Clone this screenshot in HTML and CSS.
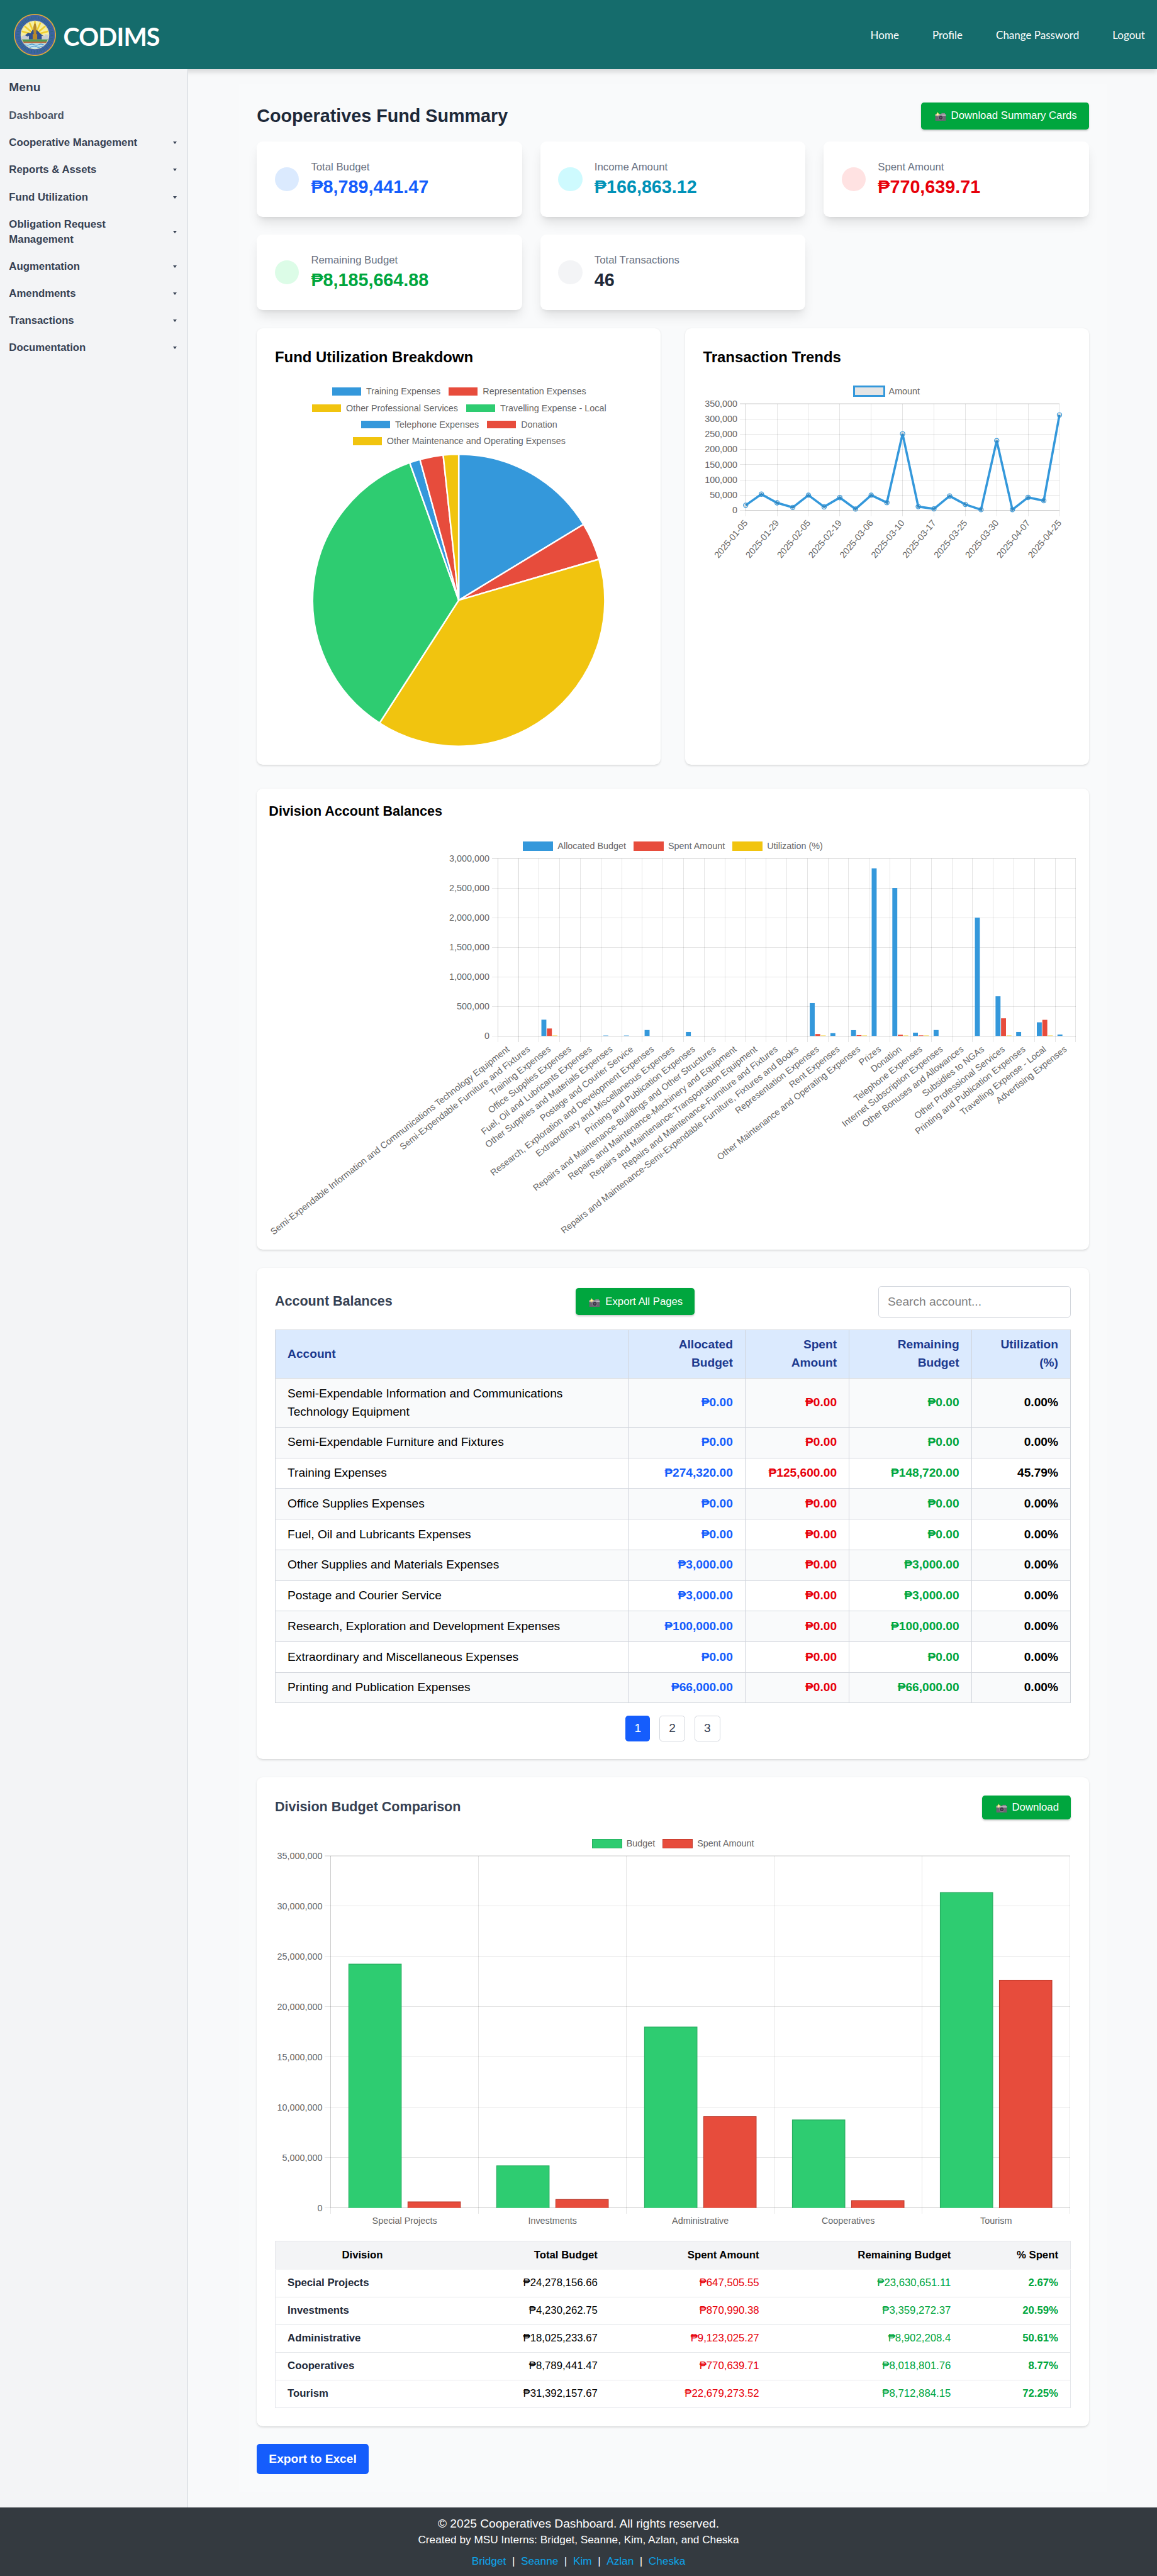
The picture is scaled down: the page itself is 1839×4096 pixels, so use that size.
FILE: index.html
```html
<!DOCTYPE html>
<html lang="en">
<head>
<meta charset="utf-8">
<title>CODIMS</title>
<link rel="stylesheet" href="styles.css">
</head>
<body>
<svg class="sprite" aria-hidden="true">
  <symbol id="camera" viewBox="0 0 14 12">
    <rect x="0" y="2.6" width="14" height="9.2" rx="0.8" fill="#6b6472"/>
    <rect x="0" y="3.4" width="14" height="1.8" fill="#b9b6bd"/>
    <rect x="8.2" y="1.6" width="4.6" height="1.6" fill="#8d8892"/>
    <circle cx="7.3" cy="7.6" r="3.4" fill="#8f8a96"/>
    <circle cx="7.3" cy="7.6" r="2.6" fill="#3b3442"/>
    <circle cx="7.3" cy="7.6" r="1.2" fill="#5d5570"/>
    <path d="M3.2 0l1 2 2 1-2 1-1 2-1-2-2-1 2-1z" fill="#fcd668"/>
    <circle cx="3.2" cy="3" r="1.1" fill="#fff3c4"/>
  </symbol>
</svg>

<header class="topbar">
  <div class="brand">
    <svg class="logo" viewBox="0 0 56 56">
      <defs><clipPath id="seal"><circle cx="28" cy="28" r="18.4"/></clipPath></defs>
      <circle cx="28" cy="28" r="28" fill="#e3a83a"/>
      <circle cx="28" cy="28" r="26.6" fill="#3f62a6"/>
      <circle cx="28" cy="28" r="22.6" fill="none" stroke="#2c6a86" stroke-width="4" stroke-dasharray="1.3 1.1 0.6 1.4"/>
      <g clip-path="url(#seal)">
        <rect width="56" height="56" fill="#f6efa0"/>
        <g stroke="#f1cd2f" stroke-width="2.2">
          <path d="M28 28L6 22M28 28L9 12M28 28L18 6M28 28V4M28 28L38 6M28 28L47 12M28 28L50 22"/>
        </g>
        <path d="M12 31l7-6 3 1 3-5 6 1 5 5 6 4v3H12z" fill="#31518f"/>
        <path d="M10 30l4-2 4 2 2-1v6H10zM37 29l4 0 0-2 6 1v7H37z" fill="#c9ccd2"/>
        <rect x="8" y="34" width="40" height="3.4" fill="#4f9a55"/>
        <rect x="8" y="37" width="40" height="2" fill="#b5673c"/>
        <rect x="8" y="39" width="40" height="9" fill="#bfe3f2"/>
        <path d="M9 41q3-1.6 6 0t6 0 6 0 6 0 6 0 6 0M12 43.6q3-1.6 6 0t6 0 6 0 6 0 6 0" fill="none" stroke="#3f8fc4" stroke-width="0.9"/>
        <path d="M27 13h2l1.2 5-.6 9h1.4v7h-6v-7h1.4l-.6-9z" fill="#b98a2b"/>
      </g>
      <circle cx="28" cy="28" r="18.6" fill="none" stroke="#f4eeb5" stroke-width="0.8"/>
    </svg>
    <span class="brand-name">CODIMS</span>
  </div>
  <nav class="topnav">
    <a>Home</a><a>Profile</a><a>Change Password</a><a>Logout</a>
  </nav>
</header>

<div class="shell">
  <aside class="sidebar">
    <h2>Menu</h2>
    <ul>
      <li class="plain">Dashboard</li>
      <li>Cooperative Management<i></i></li>
      <li>Reports &amp; Assets<i></i></li>
      <li>Fund Utilization<i></i></li>
      <li><span>Obligation Request<br>Management</span><i></i></li>
      <li>Augmentation<i></i></li>
      <li>Amendments<i></i></li>
      <li>Transactions<i></i></li>
      <li>Documentation<i></i></li>
    </ul>
  </aside>

  <main class="main">
    <div class="container">
      <div class="row-between page-head">
        <h1>Cooperatives Fund Summary</h1>
        <button class="btn-green"><svg><use href="#camera"/></svg>Download Summary Cards</button>
      </div>

      <section class="stats">
        <div class="stat"><b class="dot dot-blue"></b><div><p>Total Budget</p><strong class="blue">₱8,789,441.47</strong></div></div>
        <div class="stat"><b class="dot dot-cyan"></b><div><p>Income Amount</p><strong class="cyan">₱166,863.12</strong></div></div>
        <div class="stat"><b class="dot dot-red"></b><div><p>Spent Amount</p><strong class="red">₱770,639.71</strong></div></div>
        <div class="stat"><b class="dot dot-green"></b><div><p>Remaining Budget</p><strong class="green">₱8,185,664.88</strong></div></div>
        <div class="stat"><b class="dot dot-gray"></b><div><p>Total Transactions</p><strong class="dark">46</strong></div></div>
      </section>

      <section class="two-charts">
        <div class="card">
          <h3>Fund Utilization Breakdown</h3>
          <div class="legend pie-legend">
            <span><i class="bg-blue"></i>Training Expenses</span>
            <span><i class="bg-red"></i>Representation Expenses</span>
            <span><i class="bg-yellow"></i>Other Professional Services</span>
            <span><i class="bg-green"></i>Travelling Expense - Local</span>
            <span><i class="bg-blue"></i>Telephone Expenses</span>
            <span><i class="bg-red"></i>Donation</span>
            <span><i class="bg-yellow"></i>Other Maintenance and Operating Expenses</span>
          </div>
          <svg id="pie" class="chart" width="488" height="390" viewBox="0 0 488 390"></svg>
        </div>
        <div class="card">
          <h3>Transaction Trends</h3>
          <div class="legend"><span><i class="line-box"></i>Amount</span></div>
          <svg id="trend" class="chart" width="488" height="212" viewBox="0 32 488 212"></svg>
        </div>
      </section>

      <section class="card card-tight">
        <h3 class="small">Division Account Balances</h3>
        <div class="legend">
          <span><i class="bg-blue"></i>Allocated Budget</span>
          <span><i class="bg-red"></i>Spent Amount</span>
          <span><i class="bg-yellow"></i>Utilization (%)</span>
        </div>
        <svg id="accounts" class="chart" width="1072" height="504" viewBox="0 32 1072 504"></svg>
      </section>

      <section class="card">
        <div class="row-between">
          <h3 class="small slate">Account Balances</h3>
          <button class="btn-green"><svg><use href="#camera"/></svg>Export All Pages</button>
          <input type="text" placeholder="Search account...">
        </div>
        <table class="balances">
          <colgroup><col class="c1"><col class="c2"><col class="c3"><col class="c4"><col class="c5"></colgroup>
          <thead><tr><th>Account</th><th>Allocated<br>Budget</th><th>Spent<br>Amount</th><th>Remaining<br>Budget</th><th>Utilization<br>(%)</th></tr></thead>
          <tbody>
            <tr class="shade"><td>Semi-Expendable Information and Communications Technology Equipment</td><td>₱0.00</td><td>₱0.00</td><td>₱0.00</td><td>0.00%</td></tr>
            <tr class="shade"><td>Semi-Expendable Furniture and Fixtures</td><td>₱0.00</td><td>₱0.00</td><td>₱0.00</td><td>0.00%</td></tr>
            <tr><td>Training Expenses</td><td>₱274,320.00</td><td>₱125,600.00</td><td>₱148,720.00</td><td>45.79%</td></tr>
            <tr class="shade"><td>Office Supplies Expenses</td><td>₱0.00</td><td>₱0.00</td><td>₱0.00</td><td>0.00%</td></tr>
            <tr><td>Fuel, Oil and Lubricants Expenses</td><td>₱0.00</td><td>₱0.00</td><td>₱0.00</td><td>0.00%</td></tr>
            <tr class="shade"><td>Other Supplies and Materials Expenses</td><td>₱3,000.00</td><td>₱0.00</td><td>₱3,000.00</td><td>0.00%</td></tr>
            <tr><td>Postage and Courier Service</td><td>₱3,000.00</td><td>₱0.00</td><td>₱3,000.00</td><td>0.00%</td></tr>
            <tr class="shade"><td>Research, Exploration and Development Expenses</td><td>₱100,000.00</td><td>₱0.00</td><td>₱100,000.00</td><td>0.00%</td></tr>
            <tr><td>Extraordinary and Miscellaneous Expenses</td><td>₱0.00</td><td>₱0.00</td><td>₱0.00</td><td>0.00%</td></tr>
            <tr class="shade"><td>Printing and Publication Expenses</td><td>₱66,000.00</td><td>₱0.00</td><td>₱66,000.00</td><td>0.00%</td></tr>
          </tbody>
        </table>
        <div class="pages"><button class="on">1</button><button>2</button><button>3</button></div>
      </section>

      <section class="card">
        <div class="row-between">
          <h3 class="small slate">Division Budget Comparison</h3>
          <button class="btn-green btn-short"><svg><use href="#camera"/></svg>Download</button>
        </div>
        <div class="legend">
          <span><i class="bg-green edge-green"></i>Budget</span>
          <span><i class="bg-red edge-red"></i>Spent Amount</span>
        </div>
        <svg id="comparison" class="chart" width="1056" height="496" viewBox="0 32 1056 496"></svg>
        <table class="divisions">
          <colgroup><col class="d1"><col class="d2"><col class="d3"><col class="d4"><col class="d5"></colgroup>
          <thead><tr><th>Division</th><th>Total Budget</th><th>Spent Amount</th><th>Remaining Budget</th><th>% Spent</th></tr></thead>
          <tbody>
            <tr><td>Special Projects</td><td>₱24,278,156.66</td><td>₱647,505.55</td><td>₱23,630,651.11</td><td>2.67%</td></tr>
            <tr><td>Investments</td><td>₱4,230,262.75</td><td>₱870,990.38</td><td>₱3,359,272.37</td><td>20.59%</td></tr>
            <tr><td>Administrative</td><td>₱18,025,233.67</td><td>₱9,123,025.27</td><td>₱8,902,208.4</td><td>50.61%</td></tr>
            <tr><td>Cooperatives</td><td>₱8,789,441.47</td><td>₱770,639.71</td><td>₱8,018,801.76</td><td>8.77%</td></tr>
            <tr><td>Tourism</td><td>₱31,392,157.67</td><td>₱22,679,273.52</td><td>₱8,712,884.15</td><td>72.25%</td></tr>
          </tbody>
        </table>
      </section>

      <button class="btn-blue">Export to Excel</button>
    </div>
  </main>
</div>

<footer class="footer">
  <p>© 2025 Cooperatives Dashboard. All rights reserved.</p>
  <p class="credits">Created by MSU Interns: Bridget, Seanne, Kim, Azlan, and Cheska</p>
  <p class="people"><a>Bridget</a>|<a>Seanne</a>|<a>Kim</a>|<a>Azlan</a>|<a>Cheska</a></p>
</footer>
<script src="script.js"></script>
</body>
</html>
```

FILE: styles.css
```css
/* Sizes are written for a 1536px wide layout and scaled up as a whole. */
html { zoom: 1.1972; }
*, *::before, *::after { box-sizing: border-box; }
body, h1, h2, h3, p, ul, table { margin: 0; padding: 0; }
body {
  font-family: "Liberation Sans", Arial, Helvetica, sans-serif;
  font-size: 16px;
  line-height: 24px;
  background: #f8f9fa;
  color: #000;
}
button, input { font: inherit; border: 0; margin: 0; }
ul { list-style: none; }
.sprite { display: none; }

/* header */
.topbar {
  display: flex;
  justify-content: space-between;
  align-items: center;
  height: 92px;
  padding: 0 16px 0 18px;
  background: #156c6c;
  color: #fff;
  font-family: Lato, "Open Sans", sans-serif;
  box-shadow: 0 4px 6px rgba(0, 0, 0, 0.12);
}
.brand { display: flex; align-items: center; gap: 10px; }
.logo { width: 56px; height: 56px; }
.brand-name { font-size: 33px; font-weight: 700; line-height: 40px; letter-spacing: -0.7px; margin-top: 4px; }
.topnav { display: flex; gap: 44.3px; font-size: 14.2px; margin-top: 2px; }

/* sidebar */
.shell { display: flex; }
.sidebar {
  position: relative;
  width: 250px;
  flex: none;
  padding: 12px;
  background: #f3f4f6;
  border-right: 1px solid #d1d5dc;
  color: #364153;
  font-weight: 700;
}
.sidebar h2 { font-size: 16px; line-height: 24px; margin-bottom: 8px; }
.sidebar ul { font-size: 14px; line-height: 20px; }
.sidebar li {
  display: flex;
  justify-content: space-between;
  align-items: center;
  padding: 8px 2.4px 8px 0;
}
.sidebar .plain { color: #4a5565; }
.sidebar i {
  border: 3px solid transparent;
  border-top: 4px solid #364153;
  border-bottom: 0;
}

/* main column */
.main { flex: 1; padding: 20px 67px; }
.container { background: #f9fafb; padding: 24px; }
.row-between { display: flex; justify-content: space-between; align-items: center; margin-bottom: 16px; }
h1 { font-size: 24px; line-height: 32px; color: #1e2939; }
h3 { font-size: 20px; line-height: 28px; margin-bottom: 16px; }
h3.small { font-size: 18px; }
.row-between h3 { margin-bottom: 0; }
.slate { color: #364153; }

.btn-green {
  display: flex;
  align-items: center;
  gap: 6.6px;
  padding: 8px 16px 8px 18px;
  border-radius: 4px;
  background: #00a63e;
  color: #fff;
  font-size: 14px;
  line-height: 20px;
  box-shadow: 0 1px 3px rgba(0, 0, 0, 0.1), 0 1px 2px rgba(0, 0, 0, 0.1);
}
.btn-green svg { width: 15px; height: 12px; margin-top: 2px; }
.btn-short { padding-top: 6px; padding-bottom: 6px; }
.btn-blue {
  display: block;
  padding: 8px 16px;
  border-radius: 4px;
  background: #155dfc;
  color: #fff;
  font-weight: 700;
}

.stats { display: grid; grid-template-columns: repeat(3, 1fr); gap: 24px; margin-bottom: 24px; }
.stat {
  display: flex;
  align-items: center;
  gap: 16px;
  height: 100px;
  padding: 24px;
  background: #fff;
  border-radius: 8px;
  box-shadow: 0 10px 15px -3px rgba(0, 0, 0, 0.1), 0 4px 6px -4px rgba(0, 0, 0, 0.1);
}
.stat p { font-size: 14px; line-height: 20px; color: #6a7282; }
.stat strong { display: block; font-size: 24px; line-height: 32px; }
.dot { width: 32px; height: 32px; border-radius: 50%; }
.dot-blue { background: #dbeafe; }
.dot-cyan { background: #cefafe; }
.dot-red { background: #ffe2e2; }
.dot-green { background: #dcfce7; }
.dot-gray { background: #f3f4f6; }
.blue { color: #155dfc; }
.cyan { color: #0092b8; }
.red { color: #e7000b; }
.green { color: #00a63e; }
.dark { color: #1e2939; }

.card {
  padding: 24px;
  margin-bottom: 24px;
  background: #fff;
  border-radius: 8px;
  box-shadow: 0 1px 3px rgba(0, 0, 0, 0.1), 0 1px 2px -1px rgba(0, 0, 0, 0.1);
}
.card-tight { padding: 16px; }
.two-charts { display: grid; grid-template-columns: 1fr 1fr; gap: 32px; margin-bottom: 32px; }
.two-charts .card { margin-bottom: 0; }

/* charts */
.legend {
  display: flex;
  flex-wrap: wrap;
  justify-content: center;
  gap: 10px;
  padding: 10px 0;
  font-size: 12px;
  line-height: 12px;
  color: #666;
}
.legend span { display: flex; align-items: center; gap: 6px; height: 12px; }
.legend i { width: 40px; height: 12px; }
.pie-legend i { border: 1px solid #fff; }
.bg-blue { background: #3498db; }
.bg-red { background: #e74c3c; }
.bg-yellow { background: #f1c40f; }
.bg-green { background: #2ecc71; }
.edge-green { border: 1px solid #27ae60; }
.edge-red { border: 1px solid #c0392b; }
.legend .line-box {
  width: 43px;
  height: 15px;
  margin: 0 -1.5px;
  background: #e5e5e5;
  border: 3px solid #3498db;
}
.chart { display: block; overflow: visible; font-size: 12px; fill: #666; }
.grid { stroke: rgba(0, 0, 0, 0.1); stroke-width: 0.84; fill: none; shape-rendering: crispEdges; }
.slice { stroke: #fff; stroke-width: 2; stroke-linejoin: round; }
.trend-line { fill: none; stroke: #3498db; stroke-width: 3; }
.trend-point { fill: rgba(0, 0, 0, 0.1); stroke: #3498db; stroke-width: 1; }
.bar-budget { fill: #2ecc71; stroke: #27ae60; stroke-width: 1; }
.bar-spent { fill: #e74c3c; stroke: #c0392b; stroke-width: 1; }

/* tables */
table { width: 100%; table-layout: fixed; border-collapse: collapse; }
.balances th, .balances td { border: 1px solid #d1d5dc; padding: 7.94px 16px; text-align: right; font-weight: 700; }
.balances th { background: #dbeafe; color: #1c398e; }
.balances th:first-child, .balances td:first-child { text-align: left; }
.balances td:first-child { font-weight: 400; padding-right: 60px; }
.balances td:nth-child(2) { color: #155dfc; }
.balances td:nth-child(3) { color: #e7000b; }
.balances td:nth-child(4) { color: #00a63e; }
.shade { background: #f9fafb; }
.c1 { width: 469px; } .c2 { width: 155px; } .c3 { width: 138px; } .c4 { width: 162.5px; } .c5 { width: 131.5px; }

.divisions { margin-top: 16px; font-size: 14px; line-height: 20px; border: 1px solid #e5e7eb; }
.divisions th { background: #f3f4f6; }
.divisions th, .divisions td { padding: 8px 16px; text-align: right; }
.divisions th:first-child { text-align: center; }
.divisions tr { border-bottom: 1px solid #e5e7eb; }
.divisions thead tr { border-bottom-color: #f3f4f6; }
.divisions td:first-child { text-align: left; font-weight: 700; color: #1e2939; }
.divisions td:nth-child(3) { color: #e7000b; }
.divisions td:nth-child(4) { color: #00a63e; }
.divisions td:nth-child(5) { color: #00a63e; font-weight: 700; }
.d1 { width: 231px; } .d2 { width: 213px; } .d3 { width: 214.5px; } .d4 { width: 254.5px; } .d5 { width: 143px; }

input {
  width: 256px;
  padding: 8px 12px;
  line-height: 24px;
  height: 42px;
  border: 1px solid #d1d5dc;
  border-radius: 4px;
  background: #fff;
}
input::placeholder { color: #808080; }

.pages { display: flex; justify-content: center; gap: 12px; margin-top: 16.6px; }
.pages button {
  padding: 4px 12px;
  border: 1px solid #d1d5dc;
  border-radius: 4px;
  background: #fff;
  color: #364153;
}
.pages .on { border: 0; padding: 4.8px 12px; background: #155dfc; color: #fff; }

/* footer */
.footer {
  height: 92.4px;
  padding-top: 10px;
  overflow: hidden;
  background: #343a40;
  color: #fff;
  text-align: center;
}
.footer .credits { font-size: 14.4px; line-height: 20px; }
.footer .people { display: flex; justify-content: center; gap: 8px; margin-top: 6px; font-size: 14.4px; line-height: 22px; }
.footer a { color: #0da5ec; }
```

FILE: script.js
```javascript
const NS = "http://www.w3.org/2000/svg";

function add(svg, tag, attrs, text) {
  const el = document.createElementNS(NS, tag);
  for (const key in attrs) el.setAttribute(key, attrs[key]);
  if (text !== undefined) el.textContent = text;
  svg.appendChild(el);
  return el;
}

// Horizontal grid lines with their value labels.
function valueAxis(svg, plot, max, step) {
  for (let v = 0; v <= max; v += step) {
    const y = plot.bottom - (v / max) * (plot.bottom - plot.top);
    add(svg, "path", { class: "grid", d: `M${plot.left - 8} ${y}H${plot.right}` });
    add(svg, "text", { x: plot.left - 11, y: y + 4, "text-anchor": "end" }, v.toLocaleString("en-US"));
  }
  add(svg, "path", { class: "grid", d: `M${plot.left} ${plot.bottom}H${plot.right}` });
  add(svg, "path", { class: "grid", d: `M${plot.left} ${plot.top}V${plot.bottom}` });
}

function verticals(svg, plot, count) {
  const step = (plot.right - plot.left) / count;
  for (let i = 0; i <= count; i++) {
    add(svg, "path", { class: "grid", d: `M${plot.left + i * step} ${plot.top}V${plot.bottom + 8}` });
  }
  return step;
}

function slanted(svg, x, y, angle, text) {
  add(svg, "text", { transform: `translate(${x} ${y}) rotate(${-angle})`, y: 4.2, "text-anchor": "end" }, text);
}

function drawPie() {
  const svg = document.getElementById("pie");
  const cx = 244, cy = 195, r = 194;
  const colors = ["#3498db", "#e74c3c", "#f1c40f", "#2ecc71"];
  const stops = [0, 58.7, 73.7, 212.8, 340.4, 344.6, 353.9, 360];
  const point = a => {
    const t = (a - 90) * Math.PI / 180;
    return `${(cx + r * Math.cos(t)).toFixed(2)} ${(cy + r * Math.sin(t)).toFixed(2)}`;
  };
  for (let i = 0; i < stops.length - 1; i++) {
    const large = stops[i + 1] - stops[i] > 180 ? 1 : 0;
    add(svg, "path", {
      class: "slice",
      fill: colors[i % 4],
      d: `M${cx} ${cy}L${point(stops[i])}A${r} ${r} 0 ${large} 1 ${point(stops[i + 1])}Z`
    });
  }
}

function drawTrend() {
  const svg = document.getElementById("trend");
  const plot = { left: 57, right: 473.6, top: 32, bottom: 173.7 };
  const labels = ["2025-01-05", "2025-01-29", "2025-02-05", "2025-02-19", "2025-03-06", "2025-03-10",
    "2025-03-17", "2025-03-25", "2025-03-30", "2025-04-07", "2025-04-25"];
  const values = [17100, 53300, 25000, 9900, 50000, 11800, 42100, 4600, 50000, 25700, 251300,
    12500, 5300, 47400, 19700, 2600, 229000, 2600, 42700, 32200, 313200];
  valueAxis(svg, plot, 350000, 50000);
  const step = verticals(svg, plot, 10);
  labels.forEach((label, i) => slanted(svg, plot.left + i * step, 188, 50, label));
  const points = values.map((v, i) => [
    plot.left + i * step / 2,
    plot.bottom - (v / 350000) * (plot.bottom - plot.top)
  ]);
  add(svg, "path", { class: "trend-line", d: "M" + points.map(p => p.join(" ")).join("L") });
  points.forEach(p => add(svg, "circle", { class: "trend-point", cx: p[0], cy: p[1], r: 3 }));
}

function drawAccounts() {
  const svg = document.getElementById("accounts");
  const plot = { left: 304.2, right: 1071.6, top: 32, bottom: 267.7 };
  const rm = "Repairs and Maintenance-";
  // name, allocated, spent, utilization
  const rows = [
    ["Semi-Expendable Information and Communications Technology Equipment"],
    ["Semi-Expendable Furniture and Fixtures"],
    ["Training Expenses", 274320, 125600, 46],
    ["Office Supplies Expenses"],
    ["Fuel, Oil and Lubricants Expenses"],
    ["Other Supplies and Materials Expenses", 3000],
    ["Postage and Courier Service", 3000],
    ["Research, Exploration and Development Expenses", 100000],
    ["Extraordinary and Miscellaneous Expenses"],
    ["Printing and Publication Expenses", 66000],
    [rm + "Buildings and Other Structures"],
    [rm + "Machinery and Equipment"],
    [rm + "Transportation Equipment"],
    [rm + "Furniture and Fixtures"],
    [rm + "Semi-Expendable Furniture, Fixtures and Books"],
    ["Representation Expenses", 555000, 32000, 6],
    ["Rent Expenses", 46000],
    ["Other Maintenance and Operating Expenses", 98000, 13000, 13],
    ["Prizes", 2833000],
    ["Donation", 2500000, 20000, 1],
    ["Telephone Expenses", 55000, 9000, 16],
    ["Internet Subscription Expenses", 100000],
    ["Other Bonuses and Allowances"],
    ["Subsidies to NGAs", 2000000],
    ["Other Professional Services", 670000, 297600, 44],
    ["Printing and Publication Expenses", 66000],
    ["Travelling Expense - Local", 230000, 272000, 118],
    ["Advertising Expenses", 24000]
  ];
  const colors = ["#3498db", "#e74c3c", "#f1c40f"];
  valueAxis(svg, plot, 3000000, 500000);
  const step = verticals(svg, plot, rows.length);
  const slot = step * 0.8 / 3;
  rows.forEach((row, i) => {
    const center = plot.left + (i + 0.5) * step;
    slanted(svg, center, 283.6, 38, row[0]);
    for (let k = 0; k < 3; k++) {
      if (!row[k + 1]) continue;
      const h = Math.max(0.5, row[k + 1] / 3000000 * (plot.bottom - plot.top));
      add(svg, "rect", {
        x: center + (k - 1.5) * slot + slot * 0.05, y: plot.bottom - h,
        width: slot * 0.9, height: h, fill: colors[k]
      });
    }
  });
}

function drawComparison() {
  const svg = document.getElementById("comparison");
  const plot = { left: 74, right: 1055.6, top: 32, bottom: 499.6 };
  const rows = [
    ["Special Projects", 24278156.66, 647505.55],
    ["Investments", 4230262.75, 870990.38],
    ["Administrative", 18025233.67, 9123025.27],
    ["Cooperatives", 8789441.47, 770639.71],
    ["Tourism", 31392157.67, 22679273.52]
  ];
  valueAxis(svg, plot, 35000000, 5000000);
  const step = verticals(svg, plot, rows.length);
  const slot = step * 0.4;
  rows.forEach((row, i) => {
    const center = plot.left + (i + 0.5) * step;
    add(svg, "text", { x: center, y: 521, "text-anchor": "middle" }, row[0]);
    for (let k = 0; k < 2; k++) {
      const top = plot.bottom - row[k + 1] / 35000000 * (plot.bottom - plot.top);
      const left = center + (k - 1) * slot + slot * 0.05 + 0.5;
      const right = left + slot * 0.9 - 1;
      add(svg, "path", {
        class: k ? "bar-spent" : "bar-budget",
        d: `M${left} ${plot.bottom}V${top + 0.5}H${right}V${plot.bottom}`
      });
    }
  });
}

drawPie();
drawTrend();
drawAccounts();
drawComparison();
```
